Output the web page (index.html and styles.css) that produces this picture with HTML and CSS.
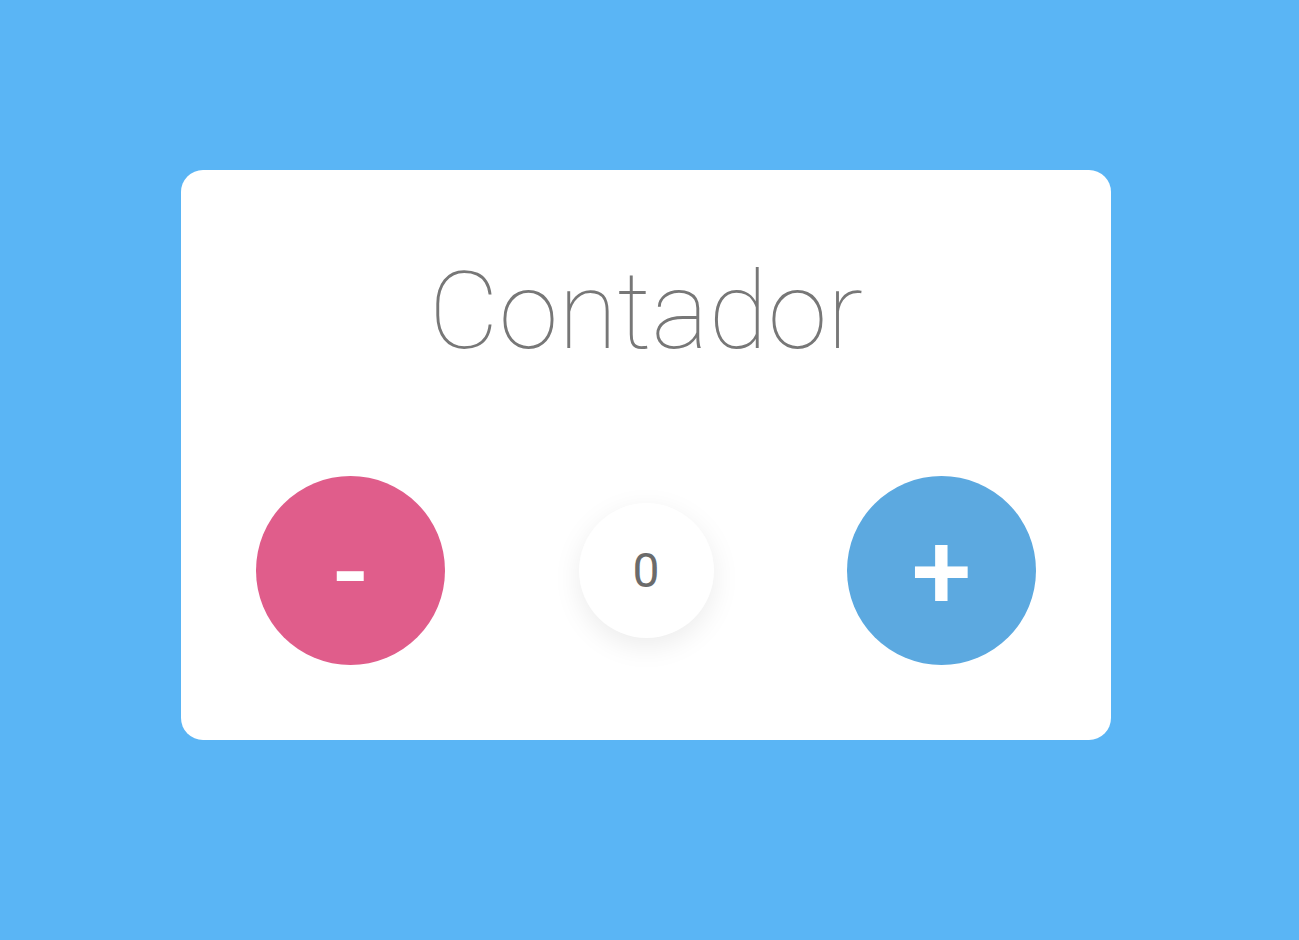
FILE: index.html
```html
<!DOCTYPE html>
<html lang="es">
<head>
<meta charset="utf-8">
<title>Contador</title>
<link rel="stylesheet" href="styles.css">
</head>
<body>
<main class="card">
  <h1 class="title">Contador</h1>
  <div class="controls">
    <button class="btn btn-minus" type="button">-</button>
    <div class="count">0</div>
    <button class="btn btn-plus" type="button">+</button>
  </div>
</main>
</body>
</html>
```

FILE: styles.css
```css
html, body {
  margin: 0;
  height: 100%;
}
body {
  background: #5ab5f5;
  font-family: Roboto, "Liberation Sans", sans-serif;
  box-sizing: border-box;
  padding: 170px 0 0 181px;
}
.card {
  width: 930px;
  height: 570px;
  box-sizing: border-box;
  background: #ffffff;
  border-radius: 22px;
  padding: 87px 75px 75px;
  display: flex;
  flex-direction: column;
  justify-content: space-between;
}
.title {
  margin: 0;
  text-align: center;
  font-size: 108px;
  line-height: 108px;
  font-weight: 100;
  color: #777777;
}
.controls {
  display: flex;
  align-items: center;
  justify-content: space-between;
}
.btn {
  width: 189px;
  height: 189px;
  border-radius: 50%;
  border: none;
  padding: 0;
  color: #ffffff;
  font-family: Roboto, "Liberation Sans", sans-serif;
  font-weight: 500;
  font-size: 104px;
  line-height: 1;
  display: flex;
  align-items: center;
  justify-content: center;
}
.btn-minus {
  background: #e05d8b;
  padding-top: 4px;
}
.btn-plus {
  background: #5ca9e0;
  font-size: 108px;
  padding-top: 2px;
}
.count {
  width: 135px;
  height: 135px;
  border-radius: 50%;
  background: #ffffff;
  box-shadow: 0 8px 28px rgba(0, 0, 0, 0.08);
  display: flex;
  align-items: center;
  justify-content: center;
  font-size: 48px;
  color: #6b6b6b;
}
```
